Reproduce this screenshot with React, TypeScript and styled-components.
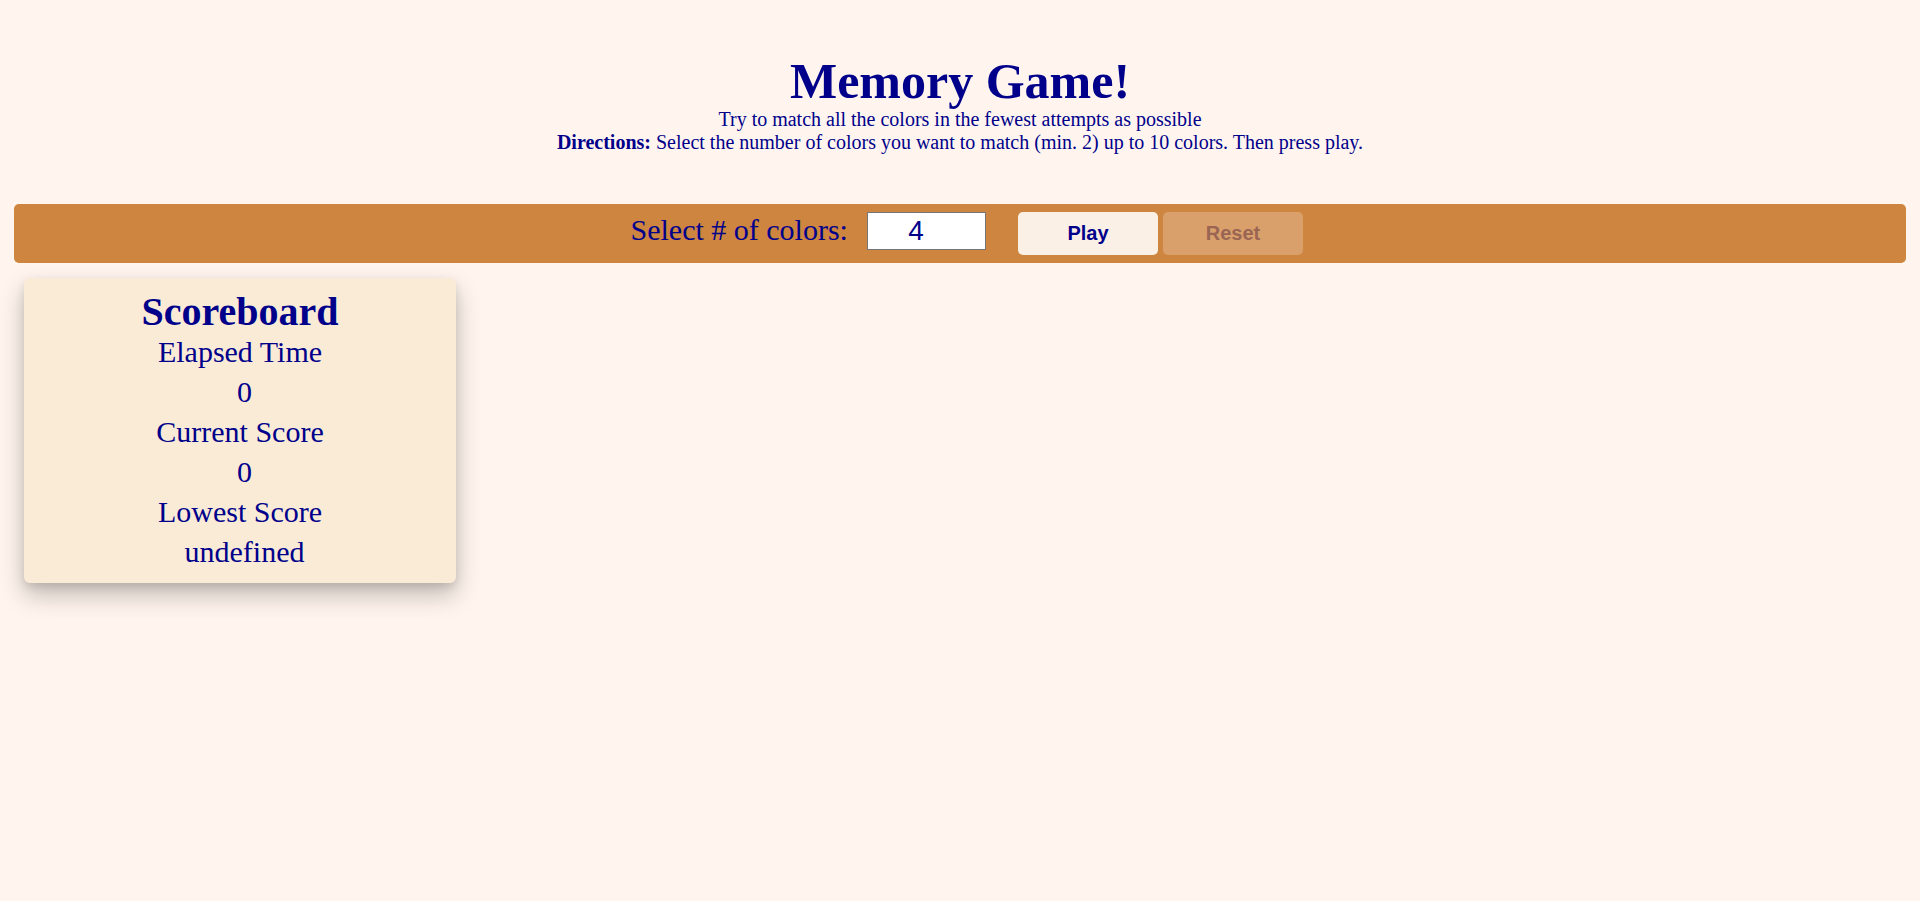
import React from "react";
import styled, { createGlobalStyle } from "styled-components";

const GlobalStyle = createGlobalStyle`
  html, body {
    margin: 0;
    padding: 0;
    background: #fff5ee;
  }
  body {
    font-family: "Liberation Serif", "Times New Roman", serif;
    color: #00008b;
  }
`;

const Page = styled.main`
  min-height: 901px;
  box-sizing: border-box;
  padding-top: 55px;
`;

const Header = styled.header`
  text-align: center;
`;

const Title = styled.h1`
  margin: 0;
  font-size: 50px;
  line-height: 52.5px;
  font-weight: bold;
`;

const Line = styled.p`
  margin: 0;
  font-size: 20px;
  line-height: 23px;
`;

const ControlBar = styled.section`
  margin: 50px 14px 0;
  padding: 8px 0 8px 13.5px;
  background: #cd853f;
  border-radius: 5px;
  display: flex;
  justify-content: center;
  align-items: baseline;
`;

const Label = styled.label`
  font-size: 30px;
  line-height: 34.5px;
`;

const CountInput = styled.input`
  box-sizing: border-box;
  width: 119px;
  height: 38px;
  margin: 0 32px 0 19px;
  padding: 0 22px 0 1px;
  border: 1px solid #767676;
  border-radius: 0;
  background: #ffffff;
  color: #00008b;
  font-family: "Liberation Sans", Arial, sans-serif;
  font-size: 28px;
  text-align: center;
  outline: none;
`;

const Button = styled.button<{ $disabled?: boolean }>`
  box-sizing: border-box;
  width: 140px;
  height: 43px;
  margin-left: ${(p) => (p.$disabled ? "5px" : "0")};
  border: none;
  border-radius: 5px;
  padding: 0;
  font-family: "Liberation Sans", Arial, sans-serif;
  font-size: 20px;
  font-weight: bold;
  background: ${(p) => (p.$disabled ? "#d9a06b" : "#faf0e6")};
  color: ${(p) => (p.$disabled ? "#9a6553" : "#00008b")};
  cursor: ${(p) => (p.$disabled ? "default" : "pointer")};
`;

const Scoreboard = styled.aside`
  box-sizing: border-box;
  width: 432px;
  margin: 15.5px 0 0 24px;
  padding: 13.5px 0 11.5px;
  background: #faebd7;
  border-radius: 6px;
  box-shadow: 0 12px 24px rgba(0, 0, 0, 0.24), 0 4px 10px rgba(0, 0, 0, 0.1);
  text-align: center;
  line-height: 40px;
`;

const BoardTitle = styled.h2`
  margin: 0;
  font-size: 40px;
  font-weight: bold;
  line-height: 40px;
`;

const StatLabel = styled.div`
  font-size: 30px;
`;

const StatValue = styled.div`
  font-size: 30px;
  padding-left: 9px;
`;

const stats = [
  { label: "Elapsed Time", value: "0" },
  { label: "Current Score", value: "0" },
  { label: "Lowest Score", value: "undefined" },
];

export default function App() {
  return (
    <>
      <GlobalStyle />
      <Page>
        <Header>
          <Title>Memory Game!</Title>
          <Line>Try to match all the colors in the fewest attempts as possible</Line>
          <Line>
            <strong>Directions:</strong> Select the number of colors you want to match (min. 2) up to 10
            colors. Then press play.
          </Line>
        </Header>
        <ControlBar>
          <Label htmlFor="count">Select # of colors:</Label>
          <CountInput id="count" type="text" defaultValue="4" />
          <Button>Play</Button>
          <Button $disabled disabled>
            Reset
          </Button>
        </ControlBar>
        <Scoreboard>
          <BoardTitle>Scoreboard</BoardTitle>
          {stats.map((s) => (
            <React.Fragment key={s.label}>
              <StatLabel>{s.label}</StatLabel>
              <StatValue>{s.value}</StatValue>
            </React.Fragment>
          ))}
        </Scoreboard>
      </Page>
    </>
  );
}
